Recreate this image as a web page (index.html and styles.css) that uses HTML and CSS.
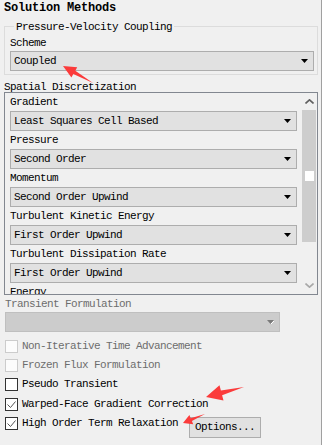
FILE: index.html
```html
<!DOCTYPE html>
<html>
<head>
<meta charset="utf-8">
<link rel="stylesheet" href="styles.css">
</head>
<body>
<div class="page">
  <div class="title">Solution Methods</div>
  <div class="group">
    <div class="legend">Pressure-Velocity Coupling</div>
    <div class="lbl">Scheme</div>
    <div class="select"><span>Coupled</span><svg class="caret" width="7" height="4" viewBox="0 0 7 4"><polygon points="0,0 7,0 3.5,4" fill="#000"/></svg></div>
  </div>
  <div class="section">Spatial Discretization</div>
  <div class="scrollbox">
    <div class="scroll-content">
      <div class="row-lbl">Gradient</div>
      <div class="select"><span>Least Squares Cell Based</span><svg class="caret" width="7" height="4" viewBox="0 0 7 4"><polygon points="0,0 7,0 3.5,4" fill="#000"/></svg></div>
      <div class="row-lbl">Pressure</div>
      <div class="select"><span>Second Order</span><svg class="caret" width="7" height="4" viewBox="0 0 7 4"><polygon points="0,0 7,0 3.5,4" fill="#000"/></svg></div>
      <div class="row-lbl">Momentum</div>
      <div class="select"><span>Second Order Upwind</span><svg class="caret" width="7" height="4" viewBox="0 0 7 4"><polygon points="0,0 7,0 3.5,4" fill="#000"/></svg></div>
      <div class="row-lbl">Turbulent Kinetic Energy</div>
      <div class="select"><span>First Order Upwind</span><svg class="caret" width="7" height="4" viewBox="0 0 7 4"><polygon points="0,0 7,0 3.5,4" fill="#000"/></svg></div>
      <div class="row-lbl">Turbulent Dissipation Rate</div>
      <div class="select"><span>First Order Upwind</span><svg class="caret" width="7" height="4" viewBox="0 0 7 4"><polygon points="0,0 7,0 3.5,4" fill="#000"/></svg></div>
      <div class="row-lbl">Energy</div>
    </div>
    <div class="scrollbar">
      <div class="sb-btn"><svg width="9" height="5" viewBox="0 0 9 5"><polyline points="0.5,4.5 4.5,0.8 8.5,4.5" fill="none" stroke="#606060" stroke-width="1.6"/></svg></div>
      <div class="sb-track"><div class="thumb"><div class="spot"></div></div></div>
      <div class="sb-btn"><svg width="9" height="5" viewBox="0 0 9 5"><polyline points="0.5,0.5 4.5,4.2 8.5,0.5" fill="none" stroke="#a8a8a8" stroke-width="1.6"/></svg></div>
    </div>
  </div>
  <div class="section dim">Transient Formulation</div>
  <div class="select disabled"><span></span><svg class="caret" width="8" height="5" viewBox="0 0 8 5"><polygon points="0,0 7,0 3.5,4" fill="#7a7a7a"/><rect x="6" y="1" width="1" height="1" fill="#fff"/><rect x="5" y="2" width="1" height="1" fill="#fff"/><rect x="4" y="3" width="1" height="1" fill="#fff"/></svg></div>
  <div class="checks">
    <div class="chk off r1"><span class="box"></span><span class="txt">Non-Iterative Time Advancement</span></div>
    <div class="chk off"><span class="box"></span><span class="txt">Frozen Flux Formulation</span></div>
    <div class="chk"><span class="box"></span><span class="txt">Pseudo Transient</span></div>
    <div class="chk r4"><span class="box"><svg width="11" height="11" viewBox="0 0 11 11"><polyline points="1.5,5.5 4.5,8.5 9.5,2.5" fill="none" stroke="#555" stroke-width="1"/></svg></span><span class="txt">Warped-Face Gradient Correction</span></div>
    <div class="chk last"><span class="box"><svg width="11" height="11" viewBox="0 0 11 11"><polyline points="1.5,5.5 4.5,8.5 9.5,2.5" fill="none" stroke="#555" stroke-width="1"/></svg></span><span class="txt">High Order Term Relaxation</span><span class="btn">Options...</span></div>
  </div>
  <svg class="annot" width="322" height="445" viewBox="0 0 322 445">
    <polygon points="63,66 77.2,67.2 75.3,70.7 93,83 73.3,74.1 71.4,77.6" fill="#fb3b3b"/>
    <polygon points="206,397 219.5,385.2 220.9,390.5 244,387 222.1,395.3 223.5,400.6" fill="#fb3b3b"/>
    <polygon points="183,423 189.4,415 190.7,418.2 205,414 191.9,421 193.2,424.2" fill="#fb3b3b"/>
  </svg>
</div>
</body>
</html>
```
FILE: styles.css
```css
* { box-sizing: border-box; }
body {
  margin: 0;
  background: #f0f0f0;
  font-family: "Liberation Mono", monospace;
  font-size: 11px;
  line-height: 14px;
  letter-spacing: -0.6px;
  color: #000;
}
.page {
  width: 322px;
  height: 445px;
  border-right: 1px solid #a0a0a0;
  position: relative;
  overflow: hidden;
}
.title {
  font-weight: bold;
  font-size: 12px;
  letter-spacing: -0.2px;
  line-height: 16px;
  padding-left: 4px;
}
.group {
  margin: 10px 0 0 4px;
  width: 314px;
  border: 1px solid #dcdcdc;
  padding: 0 3px 3px 5px;
}
.legend {
  margin: -7px 0 0 4px;
  padding: 0 2px;
  width: max-content;
  background: #f0f0f0;
  line-height: 14px;
}
.lbl { margin-top: 2px; line-height: 14px; }
.group .select { margin-top: 1px; }
.select {
  height: 20px;
  border: 1px solid #adadad;
  background: #e1e1e1;
  display: flex;
  align-items: center;
  justify-content: space-between;
  padding: 0 5px 0 3px;
  white-space: nowrap;
}
.caret { display: block; flex: none; }
.section {
  line-height: 12px;
  margin-top: 6px;
  padding-left: 4px;
}
.scrollbox {
  margin: -1px 0 0 4px;
  width: 314px;
  height: 203px;
  border: 1px solid #828790;
  display: flex;
}
.scroll-content {
  flex: 1;
  overflow: hidden;
  padding: 0 4px 0 5px;
}
.row-lbl { line-height: 18px; height: 18px; white-space: nowrap; }
.scrollbar {
  width: 16px;
  display: flex;
  flex-direction: column;
}
.sb-btn {
  height: 17px;
  display: flex;
  align-items: center;
  justify-content: center;
}
.sb-btn svg { display: block; }
.sb-track { flex: 1; }
.thumb {
  height: 132px;
  margin: 0 1px;
  background: #cdcdcd;
  padding-top: 61px;
}
.spot {
  width: 9px;
  height: 10px;
  background: #fff;
  margin-left: 3px;
}
.section.dim {
  color: #6d6d6d;
  line-height: 14px;
  margin-top: 2px;
  padding-left: 5px;
}
.select.disabled {
  margin: 1px 0 0 5px;
  width: 275px;
  background: #cccccc;
  border-color: #bfbfbf;
  padding-right: 4px;
}
.checks { padding-left: 5px; }
.chk {
  display: flex;
  align-items: center;
  height: 13px;
  gap: 4px;
  margin-top: 6px;
  white-space: nowrap;
}
.chk.r1 { margin-top: 8px; }
.chk.r4 { margin-top: 7px; }
.box {
  width: 13px;
  height: 13px;
  border: 1px solid #333;
  background: #fff;
  flex: none;
  display: flex;
  align-items: center;
  justify-content: center;
}
.box svg { display: block; }
.chk.off .box { border-color: #cccccc; background: #fcfcfc; }
.chk.off .txt { color: #6d6d6d; }
.txt { line-height: 13px; }
.chk.last { align-items: flex-start; height: auto; }
.btn {
  margin-left: 7px;
  width: 72px;
  height: 21px;
  border: 1px solid #adadad;
  background: #e1e1e1;
  line-height: 19px;
  padding-left: 5px;
}
.annot {
  position: absolute;
  left: 0;
  top: 0;
  pointer-events: none;
}
```
